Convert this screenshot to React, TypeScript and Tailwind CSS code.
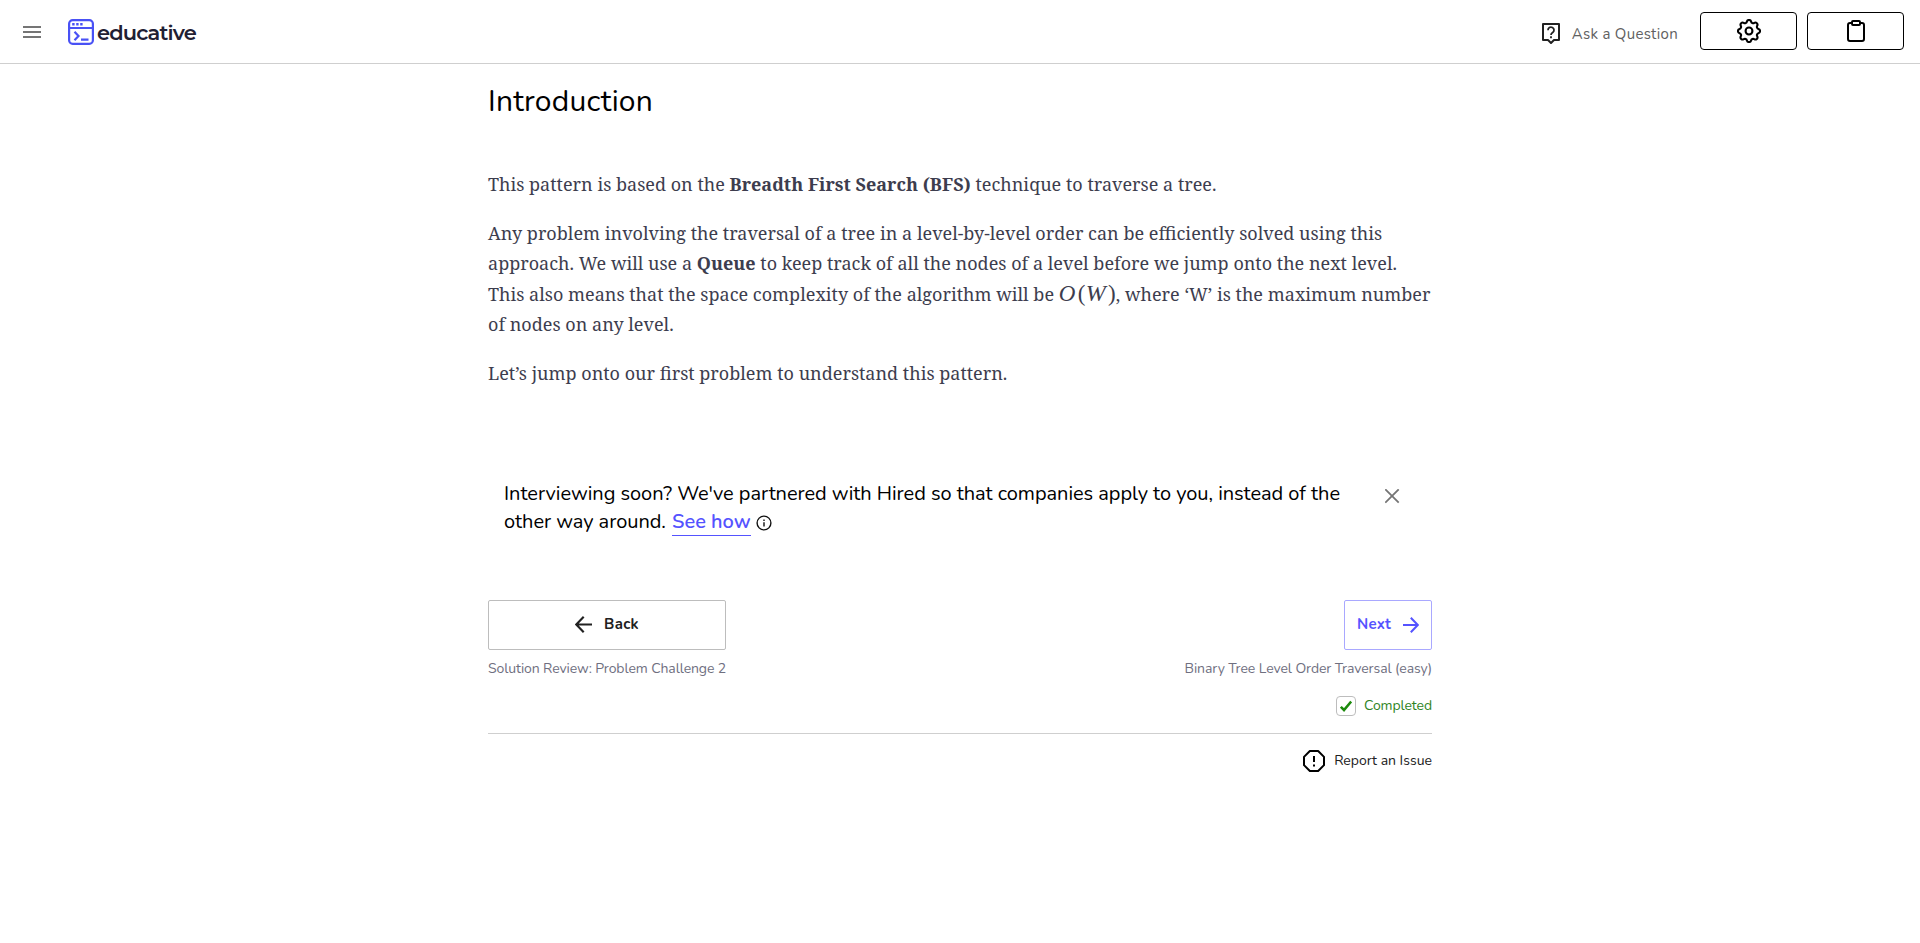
import type { ReactNode } from "react";

function Logo() {
  return (
    <div className="flex items-center">
      <svg className="h-[26px] w-[26px]" viewBox="0 0 26 26" fill="none" stroke="#4951f5" strokeWidth="2.2">
        <rect x="1.1" y="1.1" width="23.8" height="23.8" rx="3.6" />
        <path d="M1 9h24M6.5 12.8l4 4.2-4 4.2M13 20.6h7.5" />
        <path d="M4.2 5.2h2.4M8.2 5.2h2.4M12.2 5.2h2.4" strokeWidth="2.4" />
      </svg>
      <span className="mt-[2px] ml-[3px] font-[Montserrat,Nunito,sans-serif] text-[21px] leading-[26px] font-semibold tracking-[-0.85px] text-[#1f2033]">
        educative
      </span>
    </div>
  );
}

function Header() {
  return (
    <header className="flex h-16 items-start border-b border-[#cfcfcf]">
      <svg className="mt-[26px] ml-[23px] h-3 w-[18px]" viewBox="0 0 18 12" fill="#757575">
        <path d="M0 0h18v2H0zM0 5h18v2H0zM0 10h18v2H0z" />
      </svg>
      <div className="mt-[18px] ml-[27px]">
        <Logo />
      </div>
      <div className="ml-auto flex">
        <svg className="mt-[21px] h-6 w-6" viewBox="0 0 24 24" fill="none" stroke="#212121" strokeWidth="2">
          <path d="M3 3h16v16h-5l-3 3-3-3H3z" strokeLinejoin="round" />
          <path d="M8 9.2a3 3 0 1 1 4.7 2.4c-1 .7-1.7 1.2-1.7 2.4M11 15.3v2" strokeWidth="1.8" />
        </svg>
        <span className="mt-[23px] ml-2 text-[15px] leading-[22px] tracking-[0.3px] text-[#616161]">Ask a Question</span>
      </div>
      <button className="mt-3 ml-[22px] flex h-[38px] w-[97px] items-center justify-center rounded-[4px] border border-black">
        <svg className="h-6 w-6" viewBox="2.2 1.2 19.6 19.6" fill="none" stroke="#000" strokeWidth="1.7" strokeLinejoin="round">
          <path d="M10.3 3.3c.4-1.8 3-1.8 3.4 0a1.7 1.7 0 0 0 2.6 1.1c1.5-1 3.3.8 2.4 2.4a1.7 1.7 0 0 0 1 2.5c1.8.5 1.8 3 0 3.5a1.7 1.7 0 0 0-1 2.5c.9 1.6-.9 3.3-2.4 2.4a1.7 1.7 0 0 0-2.6 1c-.4 1.8-3 1.8-3.4 0a1.7 1.7 0 0 0-2.6-1c-1.5.9-3.3-.8-2.4-2.4a1.7 1.7 0 0 0-1-2.5c-1.8-.5-1.8-3 0-3.5a1.7 1.7 0 0 0 1-2.5c-.9-1.6.9-3.4 2.4-2.4a1.7 1.7 0 0 0 2.6-1.1z" />
          <circle cx="12" cy="11" r="2.8" />
        </svg>
      </button>
      <button className="mt-3 mr-4 ml-[10px] flex h-[38px] w-[97px] items-center justify-center rounded-[4px] border border-black">
        <svg className="h-6 w-6" viewBox="0 0 24 24" fill="none" stroke="#000" strokeWidth="2" strokeLinejoin="round">
          <path d="M16 4h2a2 2 0 0 1 2 2v14a2 2 0 0 1-2 2H6a2 2 0 0 1-2-2V6a2 2 0 0 1 2-2h2" />
          <rect x="8" y="2" width="8" height="4" rx="1" />
        </svg>
      </button>
    </header>
  );
}

function Paragraph({ children }: { children: ReactNode }) {
  return <p className="mb-[18px]">{children}</p>;
}

function Article() {
  return (
    <article>
      <h1 className="pt-[17px] text-[30px] leading-[41px] tracking-[0.25px] text-black">Introduction</h1>
      <div className="mt-[47px] font-['Noto_Serif',serif] text-lg leading-[30.6px] [word-spacing:0.05px] whitespace-nowrap text-[#3d3d4e]">
        <Paragraph>
          This pattern is based on the <strong>Breadth First Search (BFS)</strong> technique to traverse a tree.
        </Paragraph>
        <Paragraph>
          Any problem involving the traversal of a tree in a level-by-level order can be efficiently solved using this
          <br />
          approach. We will use a <strong>Queue</strong> to keep track of all the nodes of a level before we jump onto
          the next level.
          <br />
          This also means that the space complexity of the algorithm will be{" "}
          <span className="inline-flex w-[57px] items-baseline justify-between font-['Liberation_Serif',serif] text-[23px] leading-none">
            <i>O</i>
            <span>(</span>
            <i className="-ml-0.5 text-2xl leading-none">W</i>
            <span>)</span>
          </span>
          , where ‘W’ is the maximum number
          <br />
          of nodes on any level.
        </Paragraph>
        <Paragraph>Let’s jump onto our first problem to understand this pattern.</Paragraph>
      </div>
    </article>
  );
}

function Notice() {
  return (
    <section className="mt-[91px] flex h-14 items-start justify-between pr-8 pl-4 text-xl leading-7 text-black">
      <p className="tracking-[-0.04px] whitespace-nowrap">
        Interviewing soon? We've partnered with Hired so that companies apply to you, instead of the
        <br />
        other way around.{" "}
        <a className="ml-px inline-block h-7 border-b border-[#5553ff] align-top font-semibold text-[#5553ff]">See how</a>
        <svg className="ml-[5px] inline-block h-4 w-4 align-[-3px]" viewBox="0 0 16 16" fill="none" stroke="#111" strokeWidth="1.4">
          <circle cx="8" cy="8" r="6.9" />
          <path d="M8 7.2v4.3M8 4.5v1.5" />
        </svg>
      </p>
      <svg className="mt-[9px] h-[15px] w-[15px]" viewBox="0 0 15 15" stroke="#757575" strokeWidth="1.8">
        <path d="M.3.3l13.4 13.4M13.7.3L.3 13.7" />
      </svg>
    </section>
  );
}

function Pager() {
  return (
    <nav className="mt-16 flex justify-between text-[14px] leading-[19px] text-[#6f6f7f]">
      <div>
        <button className="flex h-[50px] w-[238px] items-center justify-center rounded-[2px] border border-[#bdbdbd] text-[15px] font-bold tracking-[0.3px] text-[#212121]">
          <svg className="mr-3 h-[17px] w-[17px]" viewBox="0 0 16 16" fill="none" stroke="#212121" strokeWidth="2">
            <path d="M16 8H1.4M8.2.8L1.2 8l7 7.2" />
          </svg>
          Back
        </button>
        <div className="mt-[9px] tracking-[-0.1px] whitespace-nowrap">Solution Review: Problem Challenge 2</div>
      </div>
      <div className="flex flex-col items-end">
        <button className="flex h-[50px] w-[88px] items-center justify-center rounded-[2px] border border-[#a9a8ff] text-[15px] font-bold tracking-[0.2px] text-[#5553ff]">
          Next
          <svg className="ml-3 h-4 w-4" viewBox="0 0 16 16" fill="none" stroke="#5553ff" strokeWidth="2">
            <path d="M0 8h14.6M7.8.8l7 7.2-7 7.2" />
          </svg>
        </button>
        <div className="mt-[9px] tracking-[-0.08px] whitespace-nowrap">Binary Tree Level Order Traversal (easy)</div>
      </div>
    </nav>
  );
}

function Status() {
  return (
    <div className="text-[14px] leading-5">
      <div className="mt-[18px] flex items-center justify-end border-b border-[#cfcfcf] pb-[17px] tracking-[-0.1px] text-[#2e8424]">
        <span className="mr-2 flex h-5 w-5 items-center justify-center rounded-[4px] border border-[#bdbdbd]">
          <svg className="h-3 w-3" viewBox="0 0 12 12" fill="none" stroke="#1c8a0c" strokeWidth="2.6">
            <path d="M.8 6.8l3.2 3.2L11.2 1.5" />
          </svg>
        </span>
        Completed
      </div>
      <div className="mt-[15px] flex items-center justify-end text-[#212121]">
        <svg className="mr-2 h-6 w-6" viewBox="0 0 24 24" fill="none" stroke="#000" strokeWidth="2" strokeLinejoin="round">
          <path d="M7.86 2h8.28L22 7.86v8.28L16.14 22H7.86L2 16.14V7.86zM12 7v6M12 15.5v2" />
        </svg>
        Report an Issue
      </div>
    </div>
  );
}

export default function App() {
  return (
    <div className="min-h-screen bg-white font-[Nunito,Lato,sans-serif]">
      <Header />
      <main className="mx-auto w-[944px]">
        <Article />
        <Notice />
        <Pager />
        <Status />
      </main>
    </div>
  );
}
